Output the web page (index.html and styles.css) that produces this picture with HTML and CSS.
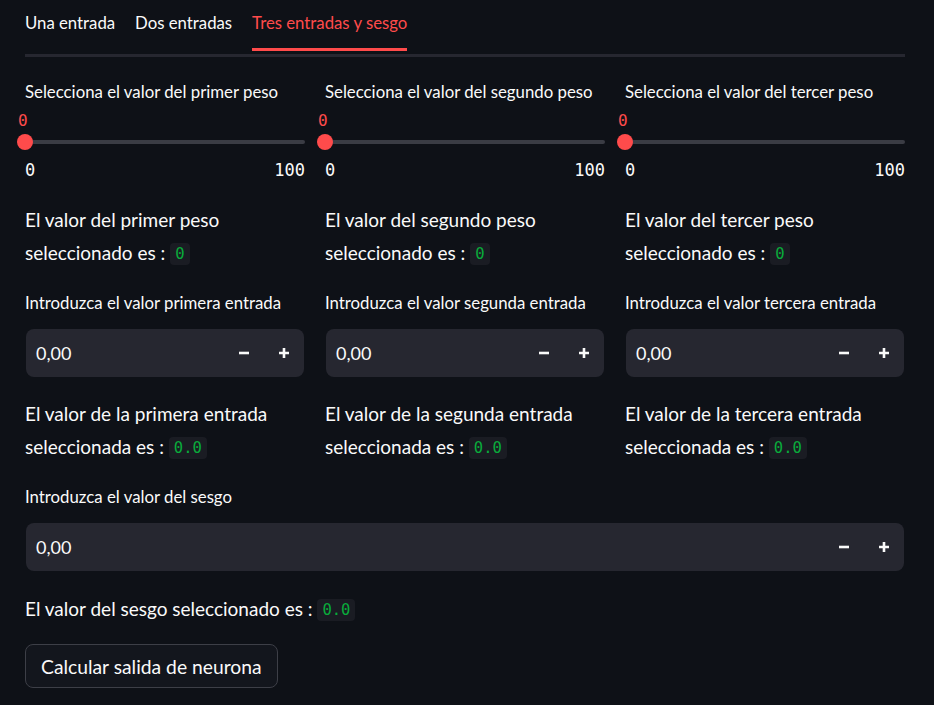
FILE: index.html
```html
<!DOCTYPE html>
<html lang="es">
<head>
<meta charset="utf-8">
<link rel="stylesheet" href="styles.css">
</head>
<body>
<div class="main">
  <div class="tabs">
    <div class="tab">Una entrada</div>
    <div class="tab">Dos entradas</div>
    <div class="tab active">Tres entradas y sesgo</div>
  </div>
  <div class="tabline"></div>

  <div class="cols sliders">
    <div class="col">
      <div class="label">Selecciona el valor del primer peso</div>
      <div class="slider">
        <div class="slider-val">0</div>
        <div class="track-wrap"><div class="track"></div><div class="thumb"></div></div>
        <div class="ticks"><span>0</span><span>100</span></div>
      </div>
    </div>
    <div class="col">
      <div class="label">Selecciona el valor del segundo peso</div>
      <div class="slider">
        <div class="slider-val">0</div>
        <div class="track-wrap"><div class="track"></div><div class="thumb"></div></div>
        <div class="ticks"><span>0</span><span>100</span></div>
      </div>
    </div>
    <div class="col">
      <div class="label">Selecciona el valor del tercer peso</div>
      <div class="slider">
        <div class="slider-val">0</div>
        <div class="track-wrap"><div class="track"></div><div class="thumb"></div></div>
        <div class="ticks"><span>0</span><span>100</span></div>
      </div>
    </div>
  </div>

  <div class="cols texts1">
    <p class="txt">El valor del primer peso seleccionado es : <code>0</code></p>
    <p class="txt">El valor del segundo peso seleccionado es : <code>0</code></p>
    <p class="txt">El valor del tercer peso seleccionado es : <code>0</code></p>
  </div>

  <div class="cols inputs">
    <div class="col">
      <div class="label">Introduzca el valor primera entrada</div>
      <div class="numinput">
        <span class="numval">0,00</span>
        <span class="step"><svg width="12" height="12" viewBox="0 0 12 12"><path d="M1 6h10" stroke="#fafafa" stroke-width="2.6"/></svg></span>
        <span class="step"><svg width="12" height="12" viewBox="0 0 12 12"><path d="M1 6h10M6 1v10" stroke="#fafafa" stroke-width="2.6"/></svg></span>
      </div>
    </div>
    <div class="col">
      <div class="label">Introduzca el valor segunda entrada</div>
      <div class="numinput">
        <span class="numval">0,00</span>
        <span class="step"><svg width="12" height="12" viewBox="0 0 12 12"><path d="M1 6h10" stroke="#fafafa" stroke-width="2.6"/></svg></span>
        <span class="step"><svg width="12" height="12" viewBox="0 0 12 12"><path d="M1 6h10M6 1v10" stroke="#fafafa" stroke-width="2.6"/></svg></span>
      </div>
    </div>
    <div class="col">
      <div class="label">Introduzca el valor tercera entrada</div>
      <div class="numinput">
        <span class="numval">0,00</span>
        <span class="step"><svg width="12" height="12" viewBox="0 0 12 12"><path d="M1 6h10" stroke="#fafafa" stroke-width="2.6"/></svg></span>
        <span class="step"><svg width="12" height="12" viewBox="0 0 12 12"><path d="M1 6h10M6 1v10" stroke="#fafafa" stroke-width="2.6"/></svg></span>
      </div>
    </div>
  </div>

  <div class="cols texts2">
    <p class="txt">El valor de la primera entrada seleccionada es : <code>0.0</code></p>
    <p class="txt">El valor de la segunda entrada seleccionada es : <code>0.0</code></p>
    <p class="txt">El valor de la tercera entrada seleccionada es : <code>0.0</code></p>
  </div>

  <div class="bias">
    <div class="label">Introduzca el valor del sesgo</div>
    <div class="numinput">
      <span class="numval">0,00</span>
      <span class="step"><svg width="12" height="12" viewBox="0 0 12 12"><path d="M1 6h10" stroke="#fafafa" stroke-width="2.6"/></svg></span>
      <span class="step"><svg width="12" height="12" viewBox="0 0 12 12"><path d="M1 6h10M6 1v10" stroke="#fafafa" stroke-width="2.6"/></svg></span>
    </div>
  </div>

  <p class="txt bias-txt">El valor del sesgo seleccionado es : <code>0.0</code></p>

  <button class="btn">Calcular salida de neurona</button>
</div>
</body>
</html>
```
FILE: styles.css
```css
* { box-sizing: border-box; }
html, body { margin: 0; padding: 0; }
body {
  background: #0e1117;
  color: #fafafa;
  font-family: Lato, "Liberation Sans", sans-serif;
  width: 934px;
  height: 705px;
  overflow: hidden;
}
.main {
  width: 880px;
  margin-left: 25px;
}
.tabs {
  display: flex;
  gap: 20px;
}
.tab {
  font-size: 16.75px;
  padding-top: 9px;
  line-height: 28px;
  padding-bottom: 11px;
  border-bottom: 3px solid transparent;
}
.tab.active {
  color: #ff4b4b;
  border-bottom-color: #ff4b4b;
}
.tabline {
  height: 3px;
  margin-top: 3px;
  background: #262730;
}
.cols {
  display: grid;
  grid-template-columns: 280px 280px 280px;
  column-gap: 20px;
}
.label {
  font-size: 16.8px;
  line-height: 20px;
  height: 20px;
  white-space: nowrap;
}
.sliders { margin-top: 25px; }
.slider { position: relative; }
.slider-val {
  margin-top: 9px;
  height: 20px;
  line-height: 20px;
  font-family: "DejaVu Sans Mono", monospace;
  font-size: 16px;
  color: #ff4b4b;
  margin-left: -7px;
}
.track-wrap {
  position: relative;
  height: 16px;
  margin-top: 3px;
  display: flex;
  align-items: center;
}
.track {
  height: 4px;
  width: 100%;
  border-radius: 2px;
  background: #3a3c44;
}
.thumb {
  position: absolute;
  left: -8px;
  top: 0;
  width: 16px;
  height: 16px;
  border-radius: 50%;
  background: #ff4b4b;
}
.ticks {
  margin-top: 10px;
  display: flex;
  justify-content: space-between;
  font-family: "DejaVu Sans Mono", monospace;
  font-size: 17px;
  height: 20px;
  line-height: 20px;
}
.txt {
  margin: 0;
  font-size: 19px;
  line-height: 33px;
}
code {
  font-family: "DejaVu Sans Mono", monospace;
  font-size: 15.5px;
  line-height: 16px;
  display: inline-block;
  vertical-align: 1px;
  color: #09ab3b;
  background: #1a1c23;
  border-radius: 4px;
  padding: 3px 5px 3px;
}
.texts1 { margin-top: 23px; }
.inputs { margin-top: 24px; }
.numinput {
  margin-top: 16px;
  height: 48px;
  margin-left: 1px;
  margin-right: 1px;
  background: #262730;
  border-radius: 8px;
  display: flex;
  align-items: center;
}
.numval {
  flex: 1;
  padding-left: 10px;
  font-size: 18px;
}
.step {
  width: 40px;
  height: 48px;
  display: flex;
  align-items: center;
  justify-content: center;
}
.texts2 { margin-top: 20px; }
.bias { margin-top: 24px; }
.bias-txt { margin-top: 21px; }
.btn {
  display: block;
  margin-top: 19px;
  height: 44px;
  padding: 0 15px;
  background: #13161d;
  border: 1px solid #3d3f47;
  border-radius: 8px;
  color: #fafafa;
  font-family: Lato, "Liberation Sans", sans-serif;
  font-size: 19.3px;
}
```
